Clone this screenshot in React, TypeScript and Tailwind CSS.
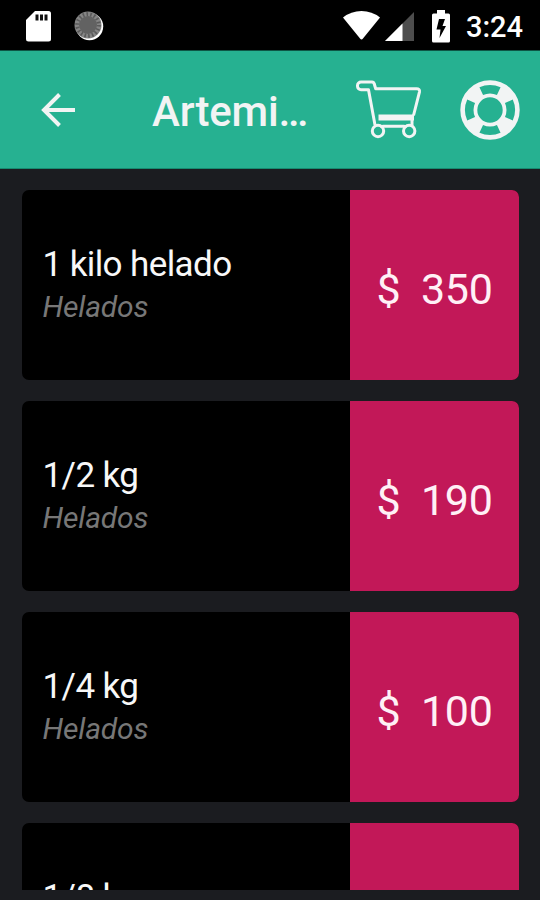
/**
 * Product list of a shop: status bar, header with cart and help
 * actions, and one card per product with its price.
 */
type Product = {
  id: number
  name: string
  category: string
  price: number
}

const PRODUCTS: Product[] = [
  { id: 1, name: '1 kilo helado', category: 'Helados', price: 350 },
  { id: 2, name: '1/2 kg', category: 'Helados', price: 190 },
  { id: 3, name: '1/4 kg', category: 'Helados', price: 100 },
  { id: 4, name: '1/8 kg', category: 'Helados', price: 60 }
]

function StatusBar() {
  return (
    <div className="flex h-[51px] shrink-0 items-center border-b border-[#0d5545] bg-black pt-px pr-[17px] pl-[26px] text-white">
      <svg width="25" height="31" viewBox="0 0 25 31" className="mt-px shrink-0">
        <path d="M9 0h13.500A2.500 2.500 0 0 1 25 2.500v25.500a2.500 2.500 0 0 1-2.500 2.500h-20A2.500 2.500 0 0 1 0 28V9z" fill="#fff" />
        <path d="M9.500 3.500h3v6h-3zM14 3.500h3v6h-3zM18.500 3.500h3v6h-3z" fill="#111" />
      </svg>
      <svg width="30" height="30" viewBox="0 0 30 30" className="ml-[23px] shrink-0">
        <circle cx="15.500" cy="15.500" r="13.700" fill="#fff" />
        <circle cx="14" cy="14" r="13.500" fill="#858585" />
        <circle cx="14" cy="14" r="10.800" fill="none" stroke="#5a5a5a" strokeWidth="4" strokeDasharray="1.600 2.170" />
        <circle cx="14" cy="14" r="9" fill="#626262" />
      </svg>
      <svg width="37" height="29" viewBox="0 0 37 29" className="ml-auto shrink-0">
        <path d="M0 6.500Q8 0 18.500 0T37 6.500L20 27.500q-1.500 1.800-3 0z" fill="#fff" />
      </svg>
      <svg width="29" height="29" viewBox="0 0 29 29" className="mt-[2px] ml-[5px] shrink-0">
        <path d="M29 0v29H0z" fill="#4d4d4d" />
        <path d="M17.500 11.500V29H0z" fill="#fff" />
      </svg>
      <svg width="18" height="33" viewBox="0 0 18 33" className="mt-px ml-[18px] shrink-0">
        <path d="M5 0h8v3.500h3.500A1.500 1.500 0 0 1 18 5v26a1.500 1.500 0 0 1-1.500 1.500h-15A1.500 1.500 0 0 1 0 31V5a1.500 1.500 0 0 1 1.500-1.500H5z" fill="#fff" />
        <path d="M7 9h6l-2.500 7H14L7.500 28l1-8.500H4.500z" fill="#000" />
      </svg>
      <span className="ml-[16px] pt-[3px] text-[29px] leading-none font-medium">3:24</span>
    </div>
  )
}

function CartIcon() {
  return (
    <svg width="66" height="62" viewBox="0 0 66 62" fill="none" stroke="#f2f4f4" strokeWidth="3" strokeLinejoin="round">
      <path d="M19 46 12.500 10.700H5a3.500 3.500 0 0 1-3.500-3.500V6.500A3.500 3.500 0 0 1 5 3H16q1.800 0 2.200 1.800l1.500 5H60.500q3.500 0 3 3L57.500 36.500" />
      <path d="M56 41v6M26.500 47.300h22M26 46v3M49 46v3" />
      <rect x="22.500" y="35.500" width="35.500" height="6" fill="#f2f4f4" stroke="none" />
      <circle cx="22" cy="52" r="5.700" />
      <circle cx="53.200" cy="52" r="5.700" />
    </svg>
  )
}

function HelpIcon() {
  return (
    <svg width="60" height="60" viewBox="0 0 60 60" fill="none">
      <circle cx="30" cy="30" r="21.200" stroke="#f2f4f4" strokeWidth="17" />
      <circle cx="30" cy="30" r="20.800" stroke="#26b191" strokeWidth="8.600" pathLength="360" strokeDasharray="50 40" strokeDashoffset="25" />
    </svg>
  )
}

function Header() {
  return (
    <header className="flex h-[118px] shrink-0 items-center border-b border-[#168b70] bg-[#26b191] pr-[20.500px] pl-[41px] text-[#f2f4f4]">
      <svg width="34" height="34" viewBox="0 0 34 34" fill="none" stroke="currentColor" strokeWidth="4">
        <path d="M18.500 1.500 3 17l15.500 15.500M3 17h31" />
      </svg>
      <h1 className="ml-[77px] w-[160px] pt-[5px] text-[42px] leading-[50px] font-medium tracking-[-0.15px] whitespace-nowrap">Artemi…</h1>
      <div className="ml-auto flex items-center gap-[38px]">
        <CartIcon />
        <HelpIcon />
      </div>
    </header>
  )
}

function ProductCard({ product }: { product: Product }) {
  return (
    <li className="flex h-[190px] shrink-0 overflow-hidden rounded-[7px] bg-black">
      <div className="flex flex-1 flex-col justify-center pt-[2px] pl-[21px]">
        <p className="text-[35px] leading-[42px] tracking-[-0.6px] text-[#f8f8f8]">{product.name}</p>
        <p className="text-[30px] leading-[42px] tracking-[-0.2px] text-[#777] italic">{product.category}</p>
      </div>
      <div className="flex w-[169px] items-center justify-center bg-[#c21858] pt-[8px] text-[43px] tracking-[-0.3px] whitespace-pre text-[#fff0f6]">
        {`$  ${product.price}`}
      </div>
    </li>
  )
}

export default function App() {
  return (
    <div className="flex h-[900px] w-[540px] flex-col overflow-hidden bg-[#1b1c20] font-[Roboto,sans-serif]">
      <StatusBar />
      <Header />
      <ul className="mb-[10px] flex min-h-0 flex-1 flex-col gap-[21px] overflow-hidden pt-[21px] pr-[21px] pl-[21.5px]">
        {PRODUCTS.map((product) => (
          <ProductCard key={product.id} product={product} />
        ))}
      </ul>
    </div>
  )
}
